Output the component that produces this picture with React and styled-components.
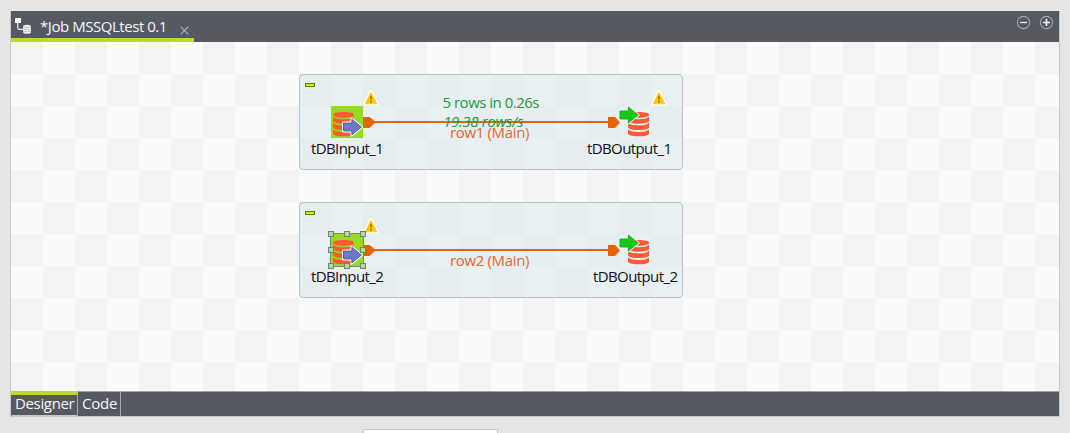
import React from "react";
import styled, { createGlobalStyle } from "styled-components";

const GlobalStyle = createGlobalStyle`
  * { box-sizing: border-box; }
  body { margin: 0; background: #e5e5e5; overflow: hidden; }
`;

const Page = styled.div`
  height: 433px;
  padding: 11px 10px 0;
  overflow: hidden;
  font-family: "Open Sans", "Noto Sans", sans-serif;
  font-size: 15px;
  line-height: 20px;
  white-space: nowrap;
`;

const Editor = styled.main`
  display: flex;
  flex-direction: column;
  height: 406px;
  border: 1px solid #c8c8c8;
  border-top: 0;
`;

const Header = styled.header`
  display: flex;
  flex: none;
  justify-content: space-between;
  height: 31px;
  background: #555962;
`;

const FileTab = styled.div`
  display: flex;
  width: 183px;
  padding: 6px 0 0 4px;
  border-bottom: 4px solid #c2d72e;
  color: #f7f7f7;
`;

const Title = styled.span`
  width: 139px;
  margin: -1px 1px 0 8px;
  letter-spacing: ${(p) => p.$track}px;
`;

const Tools = styled.div`
  display: flex;
  gap: 7px;
  padding: 4px 5px 0 0;
`;

const Canvas = styled.section`
  flex: 1;
  display: flex;
  flex-direction: column;
  gap: 32px;
  padding: 32px 0 0 288px;
  background: repeating-conic-gradient(#fafafa 0 25%, #f3f3f3 0 50%) 0 0 / 64px 64px;
`;

const Subjob = styled.div`
  position: relative;
  width: 384px;
  height: 96px;
  border: 1px solid #adc3cf;
  border-radius: 4px;
  background: rgba(217, 231, 238, 0.55);
`;

const Drawing = styled.svg`
  position: absolute;
  left: -1px;
  top: -1px;
`;

const CanvasLabel = styled.span`
  position: absolute;
  left: ${(p) => p.$x - 1}px;
  top: ${(p) => p.$y - 1}px;
  color: ${(p) => p.$color || "#111"};
  font-style: ${(p) => (p.$italic ? "italic" : "normal")};
  letter-spacing: ${(p) => p.$track || 0}px;
`;

const Footer = styled.footer`
  display: flex;
  flex: none;
  height: 25px;
  border-top: 1px solid #a3a3a5;
  background: #555962;
`;

const ViewTab = styled.div`
  position: relative;
  width: ${(p) => p.$width}px;
  height: ${(p) => (p.$active ? 25 : 24)}px;
  margin-top: ${(p) => (p.$active ? -1 : 0)}px;
  padding: ${(p) => (p.$active ? "0 0 0 4px" : "1px 0 0 4px")};
  line-height: ${(p) => (p.$active ? 17 : 20)}px;
  border-top: ${(p) => (p.$active ? "4px solid #c2d72e" : "0")};
  border-right: 1px solid #a7a8ac;
  border-bottom: ${(p) => (p.$active ? "1px solid #c8c8c8" : "0")};
  border-bottom-left-radius: ${(p) => (p.$active ? 2 : 0)}px;
  color: #f7f7f7;
  letter-spacing: ${(p) => p.$track}px;
`;

const BottomPopup = styled.div`
  width: 135px;
  height: 10px;
  margin: 12px 0 0 353px;
  border: 1px solid #c4c4c4;
  border-radius: 1px;
  background: #fff;
`;

function JobIcon() {
  return (
    <svg width="17" height="17" viewBox="0 0 17 17">
      <rect y="1" width="6" height="5" rx=".5" fill="#fff" />
      <path d="M2.700 6v4.200q0 2.200 2.500 2.200H8" fill="none" stroke="#e4e5e8" strokeWidth="1.300" />
      <path d="M8 9.500q0-1.800 4-1.800t4 1.800v5.200q0 2-4 2t-4-2z" fill="#f4f4f2" />
      <path d="M8 9.800q4 1.500 8 0M8 12q4 1.500 8 0M8 14.200q4 1.500 8 0" fill="none" stroke="#a9aaa6" strokeWidth=".7" />
    </svg>
  );
}

function CloseIcon() {
  return (
    <svg width="9" height="9" viewBox="0 0 9 9" style={{ marginTop: 9 }}>
      <path d="M.7.7l7.600 7.600M8.300.7L.7 8.300" stroke="#b3b5b9" strokeWidth="1.100" />
    </svg>
  );
}

function ZoomIcon({ plus }) {
  return (
    <svg width="16" height="16" viewBox="0 0 16 16">
      <circle cx="8.500" cy="7.500" r="6.100" fill="none" stroke="#a2a5ab" strokeWidth="1.100" />
      <path d={plus ? "M5 7.500h7M8.500 4v7" : "M5 7.500h7"} stroke="#eee" strokeWidth={plus ? 1.6 : 1.3} />
    </svg>
  );
}

function Database({ x }) {
  return (
    <g transform={`translate(${x} 38)`} fill="#ff5a36">
      <path d="M0 2.800C0 1 4.500 0 10.500 0S21 1 21 2.800 16.500 5.800 10.500 5.800 0 4.600 0 2.800z" />
      {[4.8, 11.1, 17.4].map((y) => (
        <path key={y} transform={`translate(0 ${y})`} d="M0 0Q3 2.500 10.500 2.500T21 0V4.300Q19 6.900 10.500 6.900T0 4.300z" />
      ))}
    </g>
  );
}

const ARROW = "M0 4H8.300V0L18 8 8.300 16V12H0z";

function Warning({ x }) {
  return (
    <g transform={`translate(${x} 18)`}>
      <path d="M6 0L12 12H0z" fill="#ffc800" stroke="#fff" strokeWidth="3" strokeLinejoin="round" />
      <path d="M6 .5L11.700 11.800H.3z" fill="#ffc800" stroke="#ffc800" strokeLinejoin="round" />
      <path d="M6 4v3.500M6 8.500v2" stroke="#a87808" strokeWidth="1.800" />
    </g>
  );
}

function Flow({ selected, outputWarning }) {
  return (
    <Drawing width="384" height="96" viewBox="0 0 384 96">
      <rect x="6.500" y="9.500" width="9" height="3" fill="#baff00" stroke="#5d7d00" />
      <rect x="32" y="32" width="32" height="32" fill="#97db20" />
      <Database x="34" />
      <path d={ARROW} transform="translate(44.500 45)" fill="#6973c1" stroke="#fff" strokeWidth="2.800" strokeLinejoin="round" />
      <path d={ARROW} transform="translate(44.500 45)" fill="#6f78c4" stroke="#454f9c" strokeWidth=".8" />
      <path d="M70 48H314" stroke="#e66300" strokeWidth="2" />
      <path d="M64 43H70.500L77 48 70.500 54H64zM309 43H316L321 48.500 316 54H309z" fill="#e66300" />
      <Database x="329" />
      <path d={ARROW} transform="translate(321 33)" fill="#18c715" stroke="#e9f1f3" strokeWidth="2.500" />
      <path d={ARROW} transform="translate(321 33)" fill="#18c715" stroke="#09a50c" strokeWidth=".8" />
      <Warning x={66} />
      {outputWarning && <Warning x={354} />}
      {selected && (
        <g stroke="#7c7f7d">
          <rect x="31.500" y="31.500" width="33" height="33" fill="none" />
          {[31.5, 47.5, 63.5].flatMap((x) =>
            [31.5, 47.5, 63.5].filter((y) => x !== 47.5 || y !== 47.5).map((y) => (
              <rect key={`${x}-${y}`} x={x - 2} y={y - 2} width="5" height="5" fill="#add99c" />
            ))
          )}
        </g>
      )}
    </Drawing>
  );
}

export default function App() {
  return (
    <>
      <GlobalStyle />
      <Page>
        <Editor>
          <Header>
            <FileTab>
              <JobIcon />
              <Title $track={-0.45}>*Job MSSQLtest 0.1</Title>
              <CloseIcon />
            </FileTab>
            <Tools>
              <ZoomIcon />
              <ZoomIcon plus />
            </Tools>
          </Header>
          <Canvas>
            <Subjob>
              <Flow outputWarning />
              <CanvasLabel $x={12} $y={64} $track={-0.6}>tDBInput_1</CanvasLabel>
              <CanvasLabel $x={288} $y={64} $track={-0.6}>tDBOutput_1</CanvasLabel>
              <CanvasLabel $x={143.5} $y={18} $color="#27993b" $track={-0.5}>5 rows in 0.26s</CanvasLabel>
              <CanvasLabel $x={144} $y={37} $color="#27993b" $italic $track={-0.33}>19.38 rows/s</CanvasLabel>
              <CanvasLabel $x={151} $y={48} $color="#e8672b" $track={-0.35}>row1 (Main)</CanvasLabel>
            </Subjob>
            <Subjob>
              <Flow selected />
              <CanvasLabel $x={12} $y={64} $track={-0.6}>tDBInput_2</CanvasLabel>
              <CanvasLabel $x={294} $y={64} $track={-0.6}>tDBOutput_2</CanvasLabel>
              <CanvasLabel $x={151} $y={48} $color="#e8672b" $track={-0.35}>row2 (Main)</CanvasLabel>
            </Subjob>
          </Canvas>
          <Footer>
            <ViewTab $active $width={67} $track={-0.35}>Designer</ViewTab>
            <ViewTab $width={43} $track={-0.2}>Code</ViewTab>
          </Footer>
        </Editor>
        <BottomPopup />
      </Page>
    </>
  );
}
